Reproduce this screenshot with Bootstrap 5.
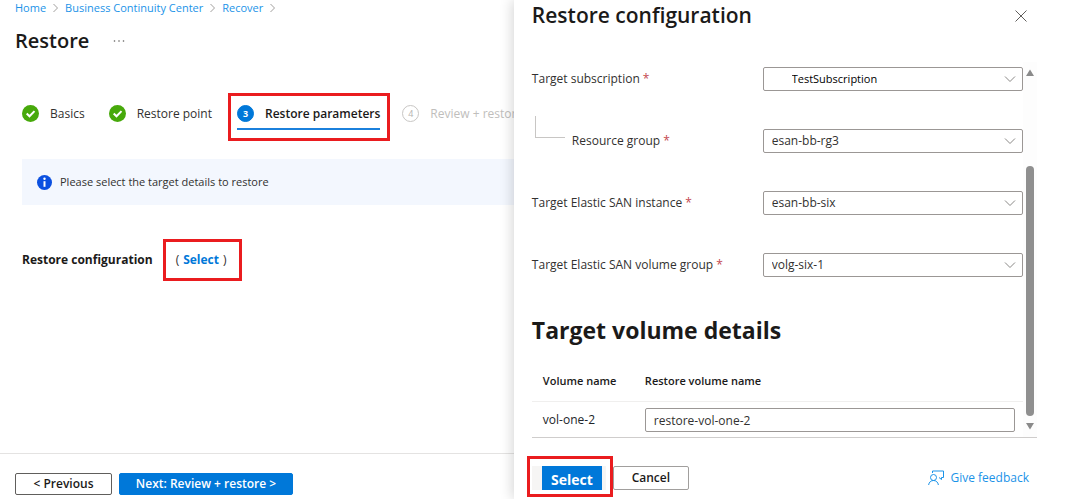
<!DOCTYPE html>
<html lang="en">
<head>
<meta charset="utf-8">
<meta name="viewport" content="width=device-width, initial-scale=1">
<title>Restore</title>
<link rel="stylesheet" href="https://cdn.jsdelivr.net/npm/bootstrap@5.3.0/dist/css/bootstrap.min.css">
<style>
  :root { --azure: #0078d9; --callout: #ea1c1f; --ink: #1b1a19; }
  body { font-family: "Open Sans", "Noto Sans", sans-serif; font-size: 12px; line-height: 16px; color: #323130; background: #fff; }
  a { text-decoration: none; color: #1b93e8; }
  .shell { min-height: 100vh; }
  .main-pane { flex: 1 1 0; min-width: 0; white-space: nowrap; }
  .side-pane { flex: 0 0 52.2%; min-width: 0; padding: 0 38px 0 18px; background: #fff; box-shadow: -2px 0 12px rgba(0,0,0,.16); clip-path: inset(0 0 0 -16px); }
  .page-title { font-size: 20px; line-height: 28px; font-weight: 600; color: var(--ink); }
  .trail { height: 16px; padding-left: 15px; gap: 7px; font-size: 11px; }
  .title-row { padding: 11px 15px 0; gap: 24px; }
  .more-btn { color: #605e5c; width: 12px; }
  .callout-box { border: 3px solid var(--callout); }
  .steps { margin-top: 38px; padding-left: 22px; }
  .step { gap: 11px; color: #323130; }
  .step-no { width: 17px; height: 17px; border-radius: 50%; font-size: 9px; line-height: 15px; font-weight: 700; border: 1px solid var(--azure); background: var(--azure); color: #fff; text-align: center; flex: none; }
  .step.todo { color: #c0bebc; }
  .step.todo .step-no { background: #fff; border-color: #c8c6c4; color: #b5b3b1; font-weight: 400; }
  .step-current { height: 48px; padding: 7px 7px 0 6px; margin: 0 12px 0 16px; }
  .step-current .step { gap: 11px; height: 27px; border-bottom: 2px solid #1b80dc; font-weight: 600; color: var(--ink); padding-bottom: 4px; }
  .info-bar { margin: 18px 0 0 22px; height: 46px; padding-left: 15px; gap: 8px; background: #f3f7fe; font-size: 11px; }
  .config-row { margin-top: 34px; padding-left: 22px; gap: 10px; }
  .config-row strong { font-weight: 700; color: var(--ink); }
  .config-pick { height: 42px; padding: 0 12px 0 10px; }
  .config-pick a { color: var(--azure); font-weight: 700; }
  .main-foot { border-top: 1px solid #e4e3e2; padding: 19px 15px 4px; gap: 7px; }
  .main-foot .btn, .side-foot .btn { font-size: 12px; line-height: 16px; font-weight: 600; border-radius: 2px; padding: 2px 0; height: 22px; }
  .main-foot .prev-btn { width: 97px; }
  .main-foot .next-btn { width: 174px; }
  .btn-plain { border: 1px solid #605e5c; color: var(--ink); background: #fff; }
  .btn-azure { border: 1px solid var(--azure); color: #fff; background: var(--azure); }
  .side-head { height: 62px; padding: 1px 8px 0 0; }
  .side-head .page-title { font-size: 21px; }
  .close-btn { width: 14px; height: 30px; }
  .scroll-area { border-bottom: 1px solid #cfcdcc; }
  .fields { min-width: 0; padding-top: 5px; }
  .field { height: 24px; margin-bottom: 38px; }
  .field label { flex: 0 0 47%; }
  .field .form-select { flex: 1 1 0; }
  .field.nested { position: relative; }
  .field.nested label { padding-left: 40px; }
  .elbow { position: absolute; left: 3px; top: -13px; width: 30px; height: 22px; border-left: 1px solid #c8c6c4; border-bottom: 1px solid #c8c6c4; }
  .req { color: #c4474f; }
  .form-select, .form-control { font-size: 12px; line-height: 16px; height: 24px; border: 1px solid #9b9795; border-radius: 2px; padding: 2px 8px; color: #323130; }
  .form-select { background-size: 12px 12px; background-position: right 6px center; background-image: url("data:image/svg+xml,%3Csvg xmlns='http://www.w3.org/2000/svg' viewBox='0 0 12 12'%3E%3Cpath d='M1 3.5l5 5 5-5' fill='none' stroke='%238a8886'/%3E%3C/svg%3E"); }
  .form-select.indented { padding-left: 28px; color: #000; font-size: 11px; }
  .section-title { font-size: 23px; line-height: 30px; font-weight: 700; color: var(--ink); margin: 0 0 28px; }
  .volumes { margin: 0; }
  .volumes th { font-size: 11px; font-weight: 600; padding: 0 0 12px; border-bottom: 1px solid #f0efee; color: var(--ink); }
  .volumes td { padding: 6px 0 5px; border: 0; vertical-align: middle; }
  .volumes tr > :first-child { width: 113px; padding-left: 11px; }
  .volumes tr > :last-child { padding-right: 8px; }
  .bar { width: 14px; padding: 7px 3px 7px; background: #fdfdfd; }
  .bar-thumb { width: 8px; border-radius: 4px; background: #8f8f8f; height: 250px; margin-bottom: 7px; }
  .side-foot { padding: 18px 8px 0 0; }
  .pick-box { margin-left: -5px; height: 41px; width: 86px; padding: 7px 4px 0 2px; }
  .pick-back { height: 24px; background: #f6f5f4; padding: 0 4px 0 10px; width: 74px; }
  .side-foot .btn-pick { height: 24px; width: 60px; font-size: 14px; line-height: 22px; font-weight: 700; padding: 2px 0 0; border-radius: 0; }
  .side-foot .btn-cancel { width: 76px; margin-top: 10px; height: 24px; border-color: #a19f9d; }
  .feedback { margin-top: 14px; gap: 6px; }
</style>
</head>
<body>
<div class="shell d-flex overflow-hidden">
  <main class="main-pane d-flex flex-column">
    <nav class="trail d-flex align-items-center" aria-label="breadcrumb">
      <a href="#">Home</a>
      <svg width="5" height="10" viewBox="0 0 5 10" fill="none" stroke="#a19f9d"><path d="M.5 1l4 4-4 4"/></svg>
      <a href="#">Business Continuity Center</a>
      <svg width="5" height="10" viewBox="0 0 5 10" fill="none" stroke="#a19f9d"><path d="M.5 1l4 4-4 4"/></svg>
      <a href="#">Recover</a>
      <svg width="5" height="10" viewBox="0 0 5 10" fill="none" stroke="#a19f9d"><path d="M.5 1l4 4-4 4"/></svg>
    </nav>
    <div class="title-row d-flex align-items-center">
      <h1 class="page-title m-0">Restore</h1>
      <button type="button" class="more-btn border-0 bg-transparent p-0 d-flex" aria-label="More actions">
        <svg width="12" height="4" viewBox="0 0 12 4" fill="currentColor"><circle cx="1.5" cy="2" r=".8"/><circle cx="6" cy="2" r=".8"/><circle cx="10.500" cy="2" r=".8"/></svg>
      </button>
    </div>

    <div class="steps d-flex align-items-start overflow-hidden">
      <div class="d-flex pt-2">
        <div class="step d-flex align-items-center mt-1">
          <svg width="17" height="17" viewBox="0 0 17 17"><circle cx="8.500" cy="8.500" r="8.500" fill="#47a90b"/><path d="M4.700 8.500l2.800 2.800 5-5.200" fill="none" stroke="#fff" stroke-width="2"/></svg>
          <span>Basics</span>
        </div>
        <div class="step d-flex align-items-center mt-1 ms-4">
          <svg width="17" height="17" viewBox="0 0 17 17"><circle cx="8.500" cy="8.500" r="8.500" fill="#47a90b"/><path d="M4.700 8.500l2.800 2.800 5-5.200" fill="none" stroke="#fff" stroke-width="2"/></svg>
          <span>Restore point</span>
        </div>
      </div>
      <div class="step-current callout-box">
        <div class="step d-flex align-items-center"><span class="step-no">3</span><span>Restore parameters</span></div>
      </div>
      <div class="pt-2"><div class="step todo d-flex align-items-center mt-1"><span class="step-no">4</span><span>Review + restore</span></div></div>
    </div>

    <div class="info-bar d-flex align-items-center" role="note">
      <svg width="15" height="15" viewBox="0 0 15 15"><circle cx="7.500" cy="7.500" r="7.500" fill="#0b50e0"/><circle cx="7.500" cy="3.800" r="1.200" fill="#fff"/><path d="M6.500 6.200h2v5.600h-2z" fill="#fff"/></svg>
      <span>Please select the target details to restore</span>
    </div>

    <div class="config-row d-flex align-items-center">
      <strong>Restore configuration</strong>
      <div class="config-pick callout-box d-flex align-items-center gap-1"><span>(</span><a href="#">Select</a><span>)</span></div>
    </div>

    <div class="main-foot d-flex mt-auto">
      <button type="button" class="btn btn-plain prev-btn">&lt; Previous</button>
      <button type="button" class="btn btn-azure next-btn">Next: Review + restore &gt;</button>
    </div>
  </main>

  <aside class="side-pane d-flex flex-column">
    <div class="side-head d-flex justify-content-between align-items-start">
      <h2 class="page-title m-0">Restore configuration</h2>
      <button type="button" class="close-btn border-0 bg-transparent p-0 d-flex align-items-center" aria-label="Close">
        <svg width="12" height="12" viewBox="0 0 12 12" stroke="#605e5c"><path d="M.5.5l11 11M11.500.5l-11 11"/></svg>
      </button>
    </div>

    <div class="scroll-area d-flex">
      <form class="fields flex-grow-1">
        <div class="field d-flex align-items-center">
          <label for="sub">Target subscription <span class="req">*</span></label>
          <select id="sub" class="form-select indented"><option>TestSubscription</option></select>
        </div>
        <div class="field nested d-flex align-items-center">
          <span class="elbow"></span>
          <label for="rg">Resource group <span class="req">*</span></label>
          <select id="rg" class="form-select"><option>esan-bb-rg3</option></select>
        </div>
        <div class="field d-flex align-items-center">
          <label for="san">Target Elastic SAN instance <span class="req">*</span></label>
          <select id="san" class="form-select"><option>esan-bb-six</option></select>
        </div>
        <div class="field d-flex align-items-center">
          <label for="vg">Target Elastic SAN volume group <span class="req">*</span></label>
          <select id="vg" class="form-select"><option>volg-six-1</option></select>
        </div>
        <h3 class="section-title">Target volume details</h3>
        <table class="table volumes">
          <thead><tr><th scope="col">Volume name</th><th scope="col">Restore volume name</th></tr></thead>
          <tbody><tr><td>vol-one-2</td><td><input type="text" class="form-control" aria-label="Restore volume name" value="restore-vol-one-2"></td></tr></tbody>
        </table>
      </form>
      <div class="bar d-flex flex-column justify-content-between" aria-hidden="true">
        <svg width="8" height="7" viewBox="0 0 8 7" fill="#8a8a8a"><path d="M4 .5L8 7H0z"/></svg>
        <div>
          <div class="bar-thumb"></div>
          <svg class="d-block" width="8" height="7" viewBox="0 0 8 7" fill="#8a8a8a"><path d="M4 6.500L8 0H0z"/></svg>
        </div>
      </div>
    </div>

    <div class="side-foot d-flex align-items-start">
      <div class="pick-box callout-box"><div class="pick-back"><button type="button" class="btn btn-azure btn-pick d-block">Select</button></div></div>
      <button type="button" class="btn btn-plain btn-cancel">Cancel</button>
      <a href="#" class="feedback d-flex align-items-center ms-auto">
        <svg width="16" height="16" viewBox="0 0 16 16" fill="none" stroke="#1b93e8"><circle cx="5.500" cy="7.500" r="3"/><path d="M.6 15c.4-2.800 2.300-4.500 4.900-4.500s4.500 1.700 4.900 4.500M4.500 3V1h11v6.500h-2v2L11 7.500"/></svg>
        <span>Give feedback</span>
      </a>
    </div>
  </aside>
</div>
<script src="https://cdn.jsdelivr.net/npm/bootstrap@5.3.0/dist/js/bootstrap.bundle.min.js"></script>
</body>
</html>
